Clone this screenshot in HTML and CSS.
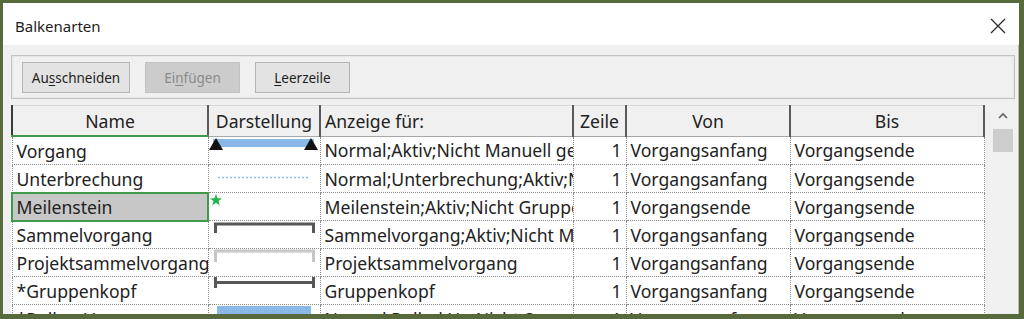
FILE: index.html
```html
<!DOCTYPE html>
<html lang="de">
<head>
<meta charset="UTF-8">
<title>Balkenarten</title>
<link rel="stylesheet" href="styles.css">
</head>
<body>
<div class="window">
  <div class="titlebar">
    <span class="title">Balkenarten</span>
    <svg class="close" width="16" height="16" viewBox="0 0 16 16">
      <path d="M1 1 L15 15 M15 1 L1 15" stroke="#2b2b2b" stroke-width="1.3" fill="none"/>
    </svg>
  </div>
  <div class="content">
    <div class="toolbar">
      <button class="btn btn-cut">Au<u>s</u>schneiden</button>
      <button class="btn btn-paste" disabled>Ei<u>n</u>fügen</button>
      <button class="btn btn-blank"><u>L</u>eerzeile</button>
    </div>
    <div class="grid">
      <table class="bars">
        <colgroup>
          <col class="c-name"><col class="c-look"><col class="c-show"><col class="c-row"><col class="c-from"><col class="c-to">
        </colgroup>
        <thead>
          <tr>
            <th class="h-name">Name</th>
            <th>Darstellung</th>
            <th class="h-left">Anzeige für:</th>
            <th>Zeile</th>
            <th>Von</th>
            <th>Bis</th>
          </tr>
        </thead>
        <tbody>
          <tr>
            <td>Vorgang</td>
            <td class="look"><svg width="110" height="27">
              <rect x="4" y="2" width="101" height="8" fill="#89b8e9"/>
              <polygon points="0,13 7,1 14,13" fill="#111"/>
              <polygon points="95,13 102,1 109,13" fill="#111"/>
            </svg></td>
            <td>Normal;Aktiv;Nicht Manuell geplant</td>
            <td class="num">1</td>
            <td>Vorgangsanfang</td>
            <td>Vorgangsende</td>
          </tr>
          <tr>
            <td>Unterbrechung</td>
            <td class="look"><svg width="110" height="27">
              <line x1="9" y1="12.5" x2="101" y2="12.5" stroke="#8dbbea" stroke-width="1.6" stroke-dasharray="2 2"/>
            </svg></td>
            <td>Normal;Unterbrechung;Aktiv;Nicht Manuell geplant</td>
            <td class="num">1</td>
            <td>Vorgangsanfang</td>
            <td>Vorgangsende</td>
          </tr>
          <tr>
            <td class="selected">Meilenstein</td>
            <td class="look"><svg width="110" height="27">
              <polygon points="7,1 8.6,5.3 13,5.4 9.5,8.1 10.8,12.4 7,9.8 3.2,12.4 4.5,8.1 1,5.4 5.4,5.3" fill="#25b24b"/>
            </svg></td>
            <td>Meilenstein;Aktiv;Nicht Gruppenkopf</td>
            <td class="num">1</td>
            <td>Vorgangsende</td>
            <td>Vorgangsende</td>
          </tr>
          <tr>
            <td>Sammelvorgang</td>
            <td class="look"><svg width="110" height="27">
              <path d="M6.5 12 V3 H104.5 V12" stroke="#575757" stroke-width="3" fill="none"/>
            </svg></td>
            <td>Sammelvorgang;Aktiv;Nicht Manuell geplant</td>
            <td class="num">1</td>
            <td>Vorgangsanfang</td>
            <td>Vorgangsende</td>
          </tr>
          <tr>
            <td>Projektsammelvorgang</td>
            <td class="look"><svg width="110" height="27">
              <path d="M6.5 13 V2 H104.5 V13" stroke="#c6c6c6" stroke-width="3" fill="none"/>
            </svg></td>
            <td>Projektsammelvorgang</td>
            <td class="num">1</td>
            <td>Vorgangsanfang</td>
            <td>Vorgangsende</td>
          </tr>
          <tr>
            <td>*Gruppenkopf</td>
            <td class="look"><svg width="110" height="27">
              <path d="M6.5 0 V11 M6.5 5.5 H104.5 M104.5 0 V11" stroke="#575757" stroke-width="3" fill="none"/>
            </svg></td>
            <td>Gruppenkopf</td>
            <td class="num">1</td>
            <td>Vorgangsanfang</td>
            <td>Vorgangsende</td>
          </tr>
          <tr>
            <td>*Rollup-Vorgang</td>
            <td class="look"><svg width="110" height="27">
              <rect x="8" y="1" width="94" height="22" fill="#89b8e9"/>
            </svg></td>
            <td>Normal;Rolled Up;Nicht Sammelvorgang</td>
            <td class="num">1</td>
            <td>Vorgangsanfang</td>
            <td>Vorgangsende</td>
          </tr>
        </tbody>
      </table>
      <div class="scrollbar">
        <svg class="arrow" width="10" height="7" viewBox="0 0 10 7">
          <path d="M1 6 L5 2 L9 6" stroke="#606060" stroke-width="1.6" fill="none"/>
        </svg>
        <div class="thumb"></div>
      </div>
    </div>
  </div>
</div>
</body>
</html>
```

FILE: styles.css
```css
html, body {
  margin: 0;
  height: 100%;
  overflow: hidden;
  background: #f0f0f0;
}
.window {
  box-sizing: border-box;
  width: 1024px;
  height: 319px;
  border-style: solid;
  border-color: #58693b;
  border-width: 3px 5px 5px 3px;
  display: flex;
  flex-direction: column;
  overflow: hidden;
  font-family: "Noto Sans", "Open Sans", sans-serif;
  color: #222;
}
.titlebar {
  height: 42px;
  flex: none;
  background: #fff;
  display: flex;
  align-items: center;
  justify-content: space-between;
  padding: 3px 13px 0 12px;
  box-sizing: border-box;
}
.title {
  font-size: 15px;
  color: #1c1c1c;
}
.close {
  display: block;
}
.content {
  flex: 1;
  background: #f0f0f0;
  padding: 10px 3px 0 8px;
  border-right: 1px solid #b9b9b9;
  overflow: hidden;
}
.toolbar {
  height: 44px;
  box-sizing: border-box;
  border: 1px solid #c3c3c3;
  box-shadow: inset 0 0 0 1px #e6e6e6;
  padding: 6px 10px;
  display: flex;
  gap: 15px;
}
.btn {
  height: 31px;
  box-sizing: border-box;
  border: 1px solid #b4b4b4;
  background: #e3e3e3;
  font-family: inherit;
  font-size: 13.5px;
  color: #1e1e1e;
  padding: 0;
}
.btn u {
  text-underline-offset: 2px;
}
.btn-cut { width: 108px; }
.btn-paste { width: 95px; }
.btn-blank { width: 95px; }
.btn:disabled {
  background: #cccccc;
  border-color: #c2c2c2;
  color: #8a8a8a;
}
.grid {
  margin-top: 6px;
  display: flex;
  align-items: flex-start;
}
.bars {
  width: 972px;
  table-layout: fixed;
  border-collapse: collapse;
  font-size: 17.6px;
  background: #fff;
}
.c-name { width: 196px; }
.c-look { width: 112px; }
.c-show { width: 253px; }
.c-row { width: 53px; }
.c-from { width: 164px; }
.c-to { width: 194px; }
.bars th {
  height: 29px;
  padding: 0 4px;
  background: #f0f0f0;
  font-weight: normal;
  text-align: center;
  white-space: nowrap;
  overflow: hidden;
  line-height: 20px;
  border-top: 1px solid #d6d6d6;
  border-bottom: 1px solid #a8a8a8;
  border-right: 2px solid #5a5a5a;
}
.bars th.h-left {
  text-align: left;
}
.bars th.h-name {
  border-left: 2px solid #3a3a3a;
  border-bottom: 2px solid #3f9a4a;
}
.bars td {
  height: 27px;
  padding: 0 4px;
  border: 1px dotted #8c8c8c;
  white-space: nowrap;
  overflow: hidden;
  vertical-align: middle;
  line-height: 20px;
}
.bars td.look {
  padding: 0;
  vertical-align: top;
}
.bars td.look svg {
  display: block;
}
.bars td.num {
  text-align: right;
}
.bars td.selected {
  background: #c7c7c7;
  outline: 2px solid #3f9a4a;
  outline-offset: -1px;
}
.scrollbar {
  width: 32px;
  padding: 7px 0 0 6px;
  box-sizing: border-box;
  display: flex;
  flex-direction: column;
  align-items: center;
}
.arrow {
  display: block;
}
.thumb {
  margin-top: 10px;
  width: 20px;
  height: 23px;
  background: #cdcdcd;
}
```
